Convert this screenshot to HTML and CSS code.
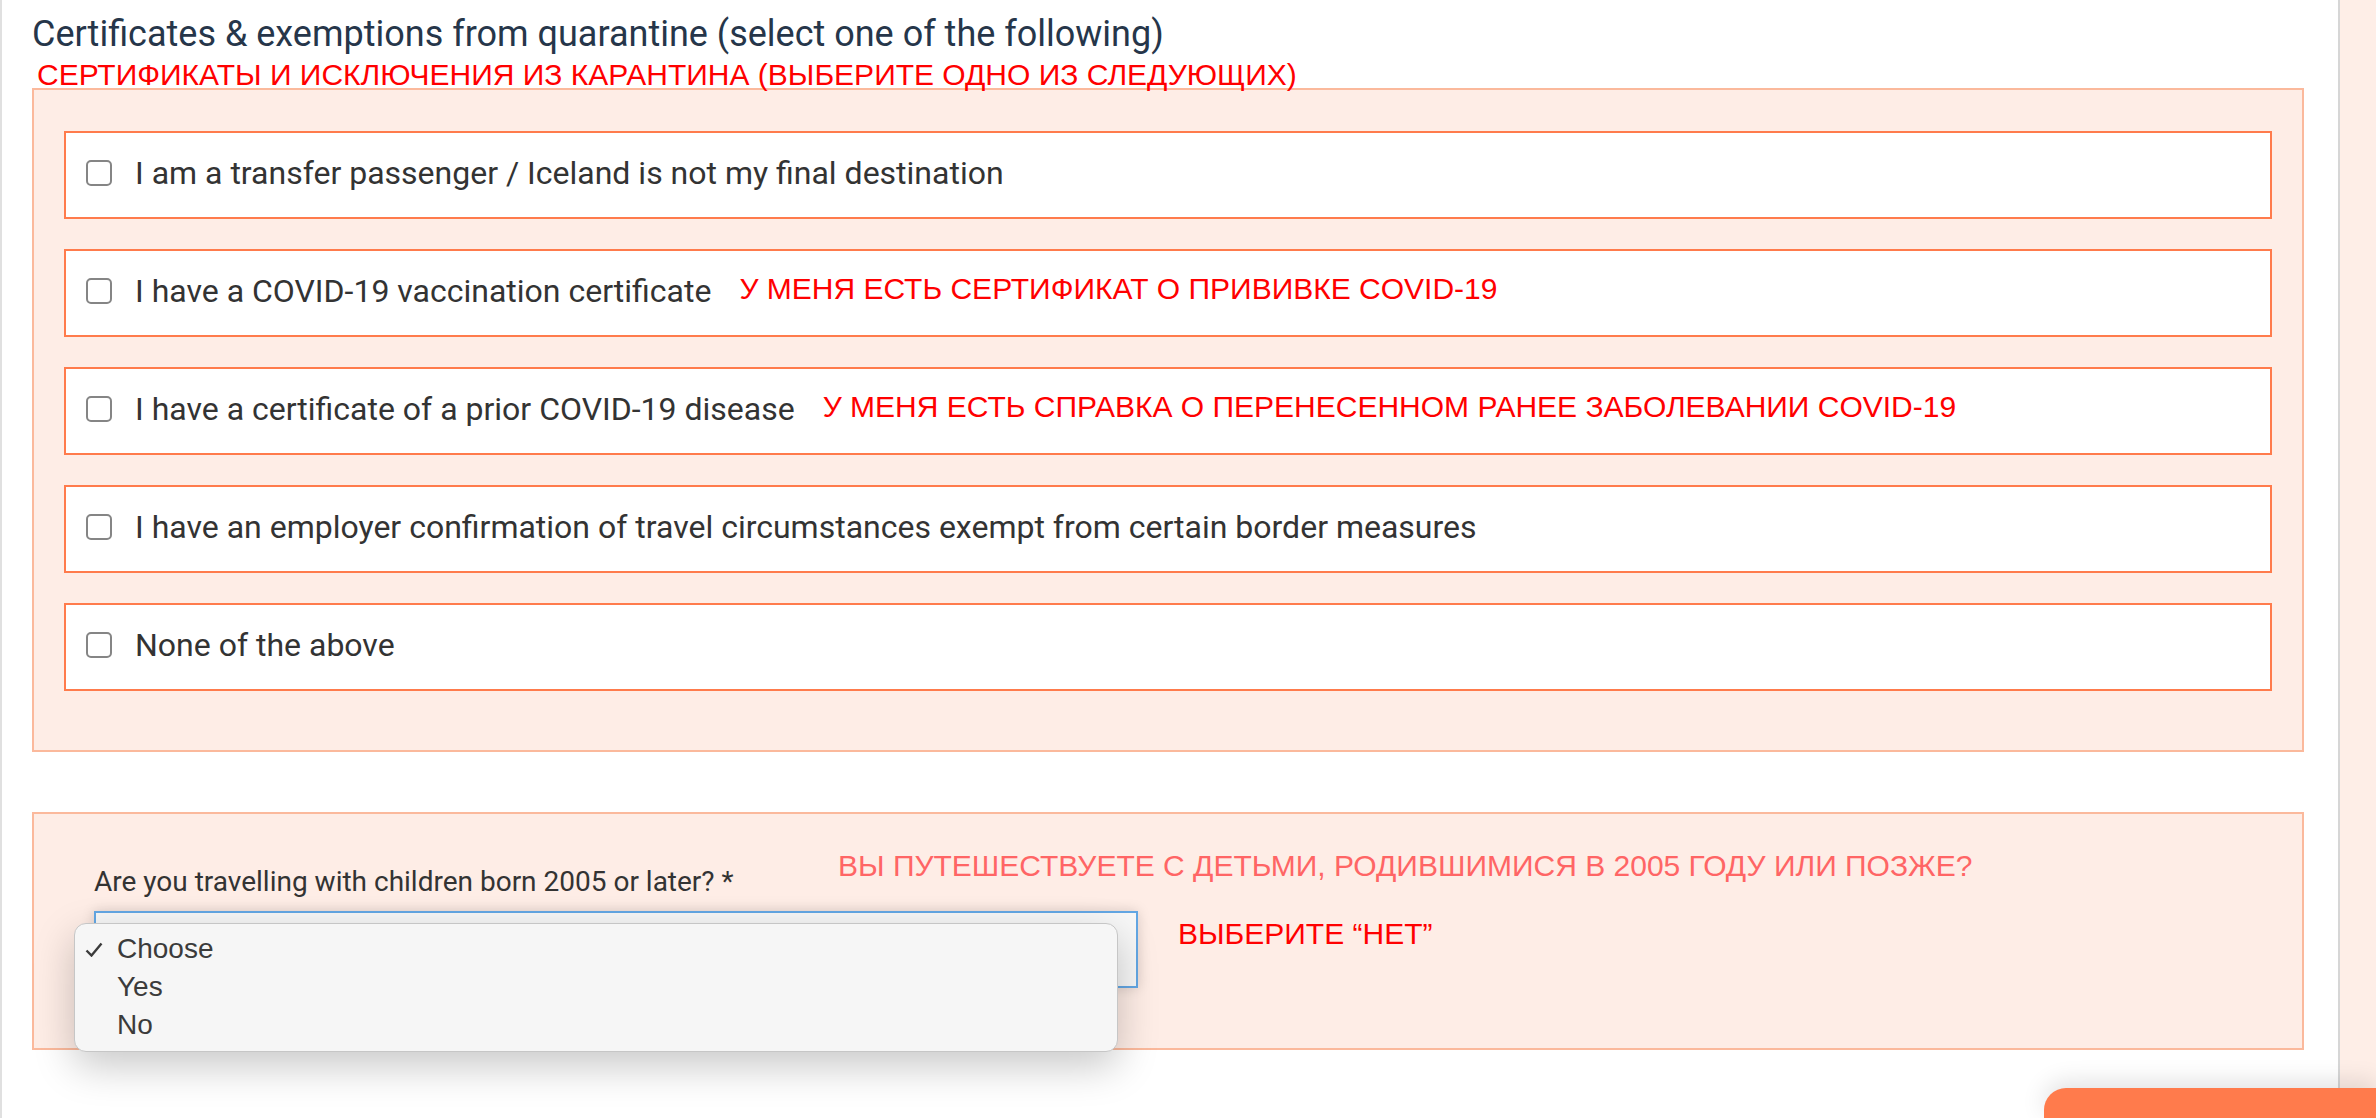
FILE: index.html
```html
<!DOCTYPE html>
<html lang="en">
<head>
  <meta charset="UTF-8">
  <meta name="viewport" content="width=device-width, initial-scale=1.0">
  <title>Certificates &amp; exemptions</title>
  <link rel="stylesheet" href="styles.css">
</head>
<body>
  <div class="page">
    <main class="content">
      <h2 class="section-title">Certificates &amp; exemptions from quarantine (select one of the following)</h2>
      <div class="note note-head">СЕРТИФИКАТЫ И ИСКЛЮЧЕНИЯ ИЗ КАРАНТИНА (ВЫБЕРИТЕ ОДНО ИЗ СЛЕДУЮЩИХ)</div>

      <!-- Exemptions -->
      <div class="panel options">
        <label class="option">
          <input type="checkbox" name="exemption">
          <span class="option-text">I am a transfer passenger / Iceland is not my final destination</span>
        </label>
        <label class="option">
          <input type="checkbox" name="exemption">
          <span class="option-text">I have a COVID-19 vaccination certificate</span>
          <span class="note note-inline">У МЕНЯ ЕСТЬ СЕРТИФИКАТ О ПРИВИВКЕ COVID-19</span>
        </label>
        <label class="option">
          <input type="checkbox" name="exemption">
          <span class="option-text">I have a certificate of a prior COVID-19 disease</span>
          <span class="note note-inline">У МЕНЯ ЕСТЬ СПРАВКА О ПЕРЕНЕСЕННОМ РАНЕЕ ЗАБОЛЕВАНИИ COVID-19</span>
        </label>
        <label class="option">
          <input type="checkbox" name="exemption">
          <span class="option-text">I have an employer confirmation of travel circumstances exempt from certain border measures</span>
        </label>
        <label class="option">
          <input type="checkbox" name="exemption">
          <span class="option-text">None of the above</span>
        </label>
      </div>

      <!-- Children -->
      <div class="panel children">
        <div class="children-row">
          <label class="field-label">Are you travelling with children born 2005 or later? *</label>
          <span class="note note-soft">ВЫ ПУТЕШЕСТВУЕТЕ С ДЕТЬМИ, РОДИВШИМИСЯ В 2005 ГОДУ ИЛИ ПОЗЖЕ?</span>
        </div>
        <div class="children-row select-row">
          <div class="select-wrap">
            <div class="select"></div>
            <ul class="dropdown">
              <li>
                <svg class="check" width="18" height="15" viewBox="0 0 18 15"><path d="M1.5 8.5 L6.5 13.5 L16.5 1.5" fill="none" stroke="#3b3b3b" stroke-width="2.4"/></svg>
                Choose
              </li>
              <li>Yes</li>
              <li>No</li>
            </ul>
          </div>
          <span class="note note-pick">ВЫБЕРИТЕ “НЕТ”</span>
        </div>
      </div>
    </main>
    <aside class="side"></aside>
  </div>

  <div class="footer-btn"></div>
</body>
</html>
```

FILE: styles.css
```css
body {
  margin: 0;
  font-family: Roboto, "Liberation Sans", sans-serif;
  background-color: #fff;
}
.page {
  display: flex;
  min-height: 100vh;
}
.content {
  flex: 1;
  border-left: 2px solid #e0e0e0;
  border-right: 2px solid #d6d6d6;
  padding: 0 34px 0 30px;
}
.side {
  width: 36px;
  background-color: #feeee7;
}
.section-title {
  margin: 13px 0 6px;
  font-size: 36px;
  font-weight: 400;
  line-height: 42px;
  color: #26364a;
}
.note {
  font-family: "Liberation Sans", Arial, sans-serif;
  font-size: 30px;
  line-height: 28px;
  color: #ff0000;
  white-space: nowrap;
}
.note-head {
  margin-left: 5px;
  line-height: 27px;
}
.panel {
  border: 2px solid #fbb99c;
  background-color: #feede6;
}
.options {
  display: flex;
  flex-direction: column;
  gap: 30px;
  padding: 41px 30px 59px;
}
.option {
  display: flex;
  align-items: center;
  box-sizing: border-box;
  height: 88px;
  padding: 0 20px 4px;
  border: 2px solid #ff7b4c;
  background-color: #fff;
  cursor: pointer;
}
.option input {
  appearance: none;
  -webkit-appearance: none;
  box-sizing: border-box;
  width: 26px;
  height: 26px;
  margin: 0 23px 0 0;
  border: 2px solid #858585;
  border-radius: 5px;
  background-color: #fff;
  flex-shrink: 0;
}
.option-text {
  font-size: 32px;
  line-height: 37px;
  color: #333;
}
.note-inline {
  margin: 0 0 4px 28px;
}
.children {
  margin-top: 60px;
  padding: 38px 30px 60px 60px;
}
.children-row {
  display: flex;
  align-items: flex-start;
}
.field-label {
  flex: 0 0 744px;
  margin-top: 13px;
  font-size: 28px;
  line-height: 33px;
  color: #333;
}
.note-soft {
  color: #ff6565;
}
.select-row {
  margin-top: 13px;
}
.select-wrap {
  position: relative;
  width: 1044px;
  height: 77px;
  flex-shrink: 0;
}
.select {
  box-sizing: border-box;
  height: 100%;
  border: 2px solid #63a7e4;
  background-color: #f7f7f7;
  box-shadow: 0 0 12px rgba(0, 0, 0, 0.15);
}
.dropdown {
  position: absolute;
  left: -20px;
  top: 12px;
  box-sizing: border-box;
  width: 1044px;
  height: 129px;
  margin: 0;
  padding: 6px 0;
  list-style: none;
  border: 1px solid #c6c6c6;
  border-radius: 12px;
  background-color: #f6f6f6;
  box-shadow: 0 14px 40px rgba(0, 0, 0, 0.22);
  font-family: "Liberation Sans", Arial, sans-serif;
  font-size: 28px;
  line-height: 38px;
  color: #3b3b3b;
}
.dropdown li {
  position: relative;
  padding-left: 42px;
}
.dropdown .check {
  position: absolute;
  left: 10px;
  top: 12px;
}
.note-pick {
  margin: 9px 0 0 40px;
}
.footer-btn {
  position: fixed;
  right: 0;
  bottom: 0;
  width: 332px;
  height: 30px;
  background-color: #ff7b4c;
  border-top-left-radius: 22px;
  box-shadow: 0 -6px 24px rgba(0, 0, 0, 0.12);
}
```
